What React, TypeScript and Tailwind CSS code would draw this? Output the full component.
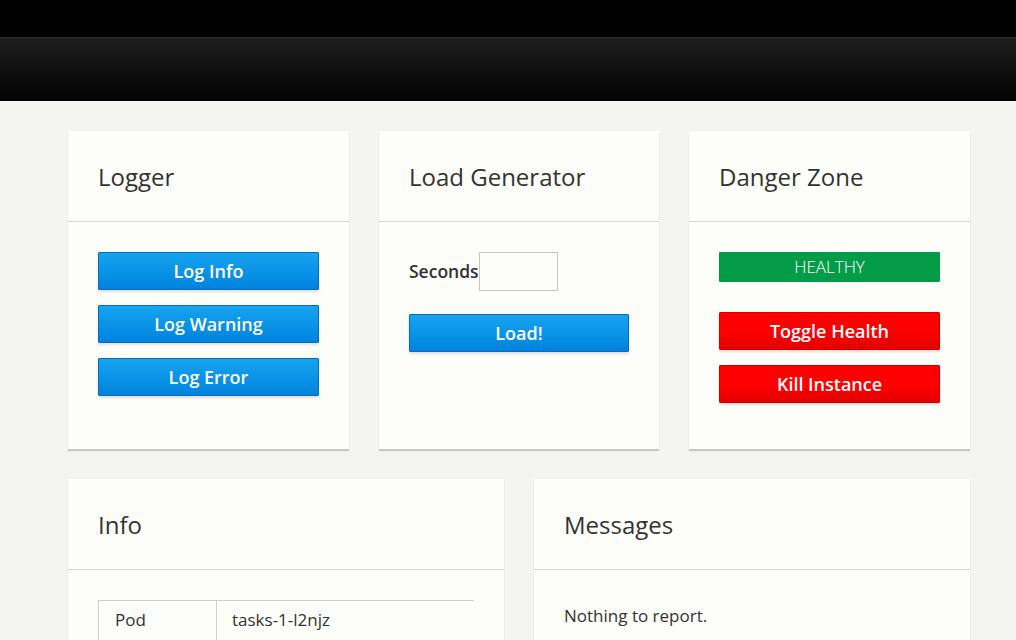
import React from "react"

const font = { fontFamily: '"Open Sans", "Liberation Sans", sans-serif' }

function Card({ title, children }: { title: string; children: React.ReactNode }) {
  return (
    <div className="bg-[#fdfdf9] shadow-[0_2px_1px_rgba(0,0,0,0.18)]">
      <div className="h-[91px] flex items-center px-[30px] border-b border-[#d5d5d1]">
        <h2 className="text-[24px] text-[#333] font-normal leading-none pt-[2px]">{title}</h2>
      </div>
      <div className="px-[30px] pt-[30px] pb-[31px]">{children}</div>
    </div>
  )
}

function Button({ label, tone, width = "w-[221px]", className = "" }: { label: string; tone: "blue" | "red"; width?: string; className?: string }) {
  const toneClass =
    tone === "blue"
      ? "border-[#0a6bbd] bg-gradient-to-b from-[#17a4ef] to-[#0083df]"
      : "border-[#d40000] bg-gradient-to-b from-[#ff0000] via-[#ff0000] to-[#e40000]"
  return (
    <button className={`${width} h-[38px] rounded-[1px] border ${toneClass} text-white text-[18px] font-semibold shadow-[0_2px_3px_rgba(0,0,0,0.12)] ${className}`}>
      {label}
    </button>
  )
}

export default function App() {
  return (
    <div className="min-h-[640px] bg-[#f4f4f0]" style={font}>
      <div className="h-[37px] bg-black" />
      <div className="h-[64px] bg-gradient-to-b from-[#1f1f1f] to-[#040404] border-t border-[#2c2c2c]" />

      <div className="w-[902px] ml-[68px] pt-[30px] flex flex-col gap-[30px]">
        <div className="grid grid-cols-[281px_280px_281px] gap-[30px]">
          <Card title="Logger">
            <div className="flex flex-col gap-[15px] pb-[15px]">
              <Button tone="blue" label="Log Info" />
              <Button tone="blue" label="Log Warning" />
              <Button tone="blue" label="Log Error" />
            </div>
          </Card>

          <Card title="Load Generator">
            <div className="flex items-center">
              <label className="text-[17.5px] font-semibold text-[#333]">Seconds</label>
              <input className="w-[79px] h-[39px] border border-[#c4c4c0] bg-[#fdfdf9] outline-none" />
            </div>
            <Button tone="blue" label="Load!" width="w-[220px]" className="mt-[23px]" />
          </Card>

          <Card title="Danger Zone">
            <div className="flex flex-col pb-[15px]">
              <div className="w-[221px] h-[30px] bg-[#049c48] text-white text-[17px] font-light flex items-center justify-center rounded-[1px]">
                HEALTHY
              </div>
              <Button tone="red" label="Toggle Health" className="mt-[30px]" />
              <Button tone="red" label="Kill Instance" className="mt-[15px]" />
            </div>
          </Card>
        </div>

        <div className="grid grid-cols-2 gap-[30px]">
          <Card title="Info">
            <table className="w-full border-collapse text-[17px] text-[#333]">
              <tbody>
                <tr>
                  <td className="w-[118px] border-l border-t border-[#d0d0cc] pl-[16px] pt-[6px] pb-[10px]">Pod</td>
                  <td className="border-l border-t border-[#d0d0cc] pl-[15px] pt-[6px] pb-[10px]">tasks-1-l2njz</td>
                </tr>
                <tr>
                  <td className="w-[118px] border-l border-t border-[#d0d0cc] pl-[16px] py-[8px]">&nbsp;</td>
                  <td className="border-l border-t border-[#d0d0cc] pl-[15px] py-[8px]">&nbsp;</td>
                </tr>
              </tbody>
            </table>
          </Card>

          <Card title="Messages">
            <p className="text-[17px] text-[#333] pt-[3px]">Nothing to report.</p>
          </Card>
        </div>
      </div>
    </div>
  )
}
